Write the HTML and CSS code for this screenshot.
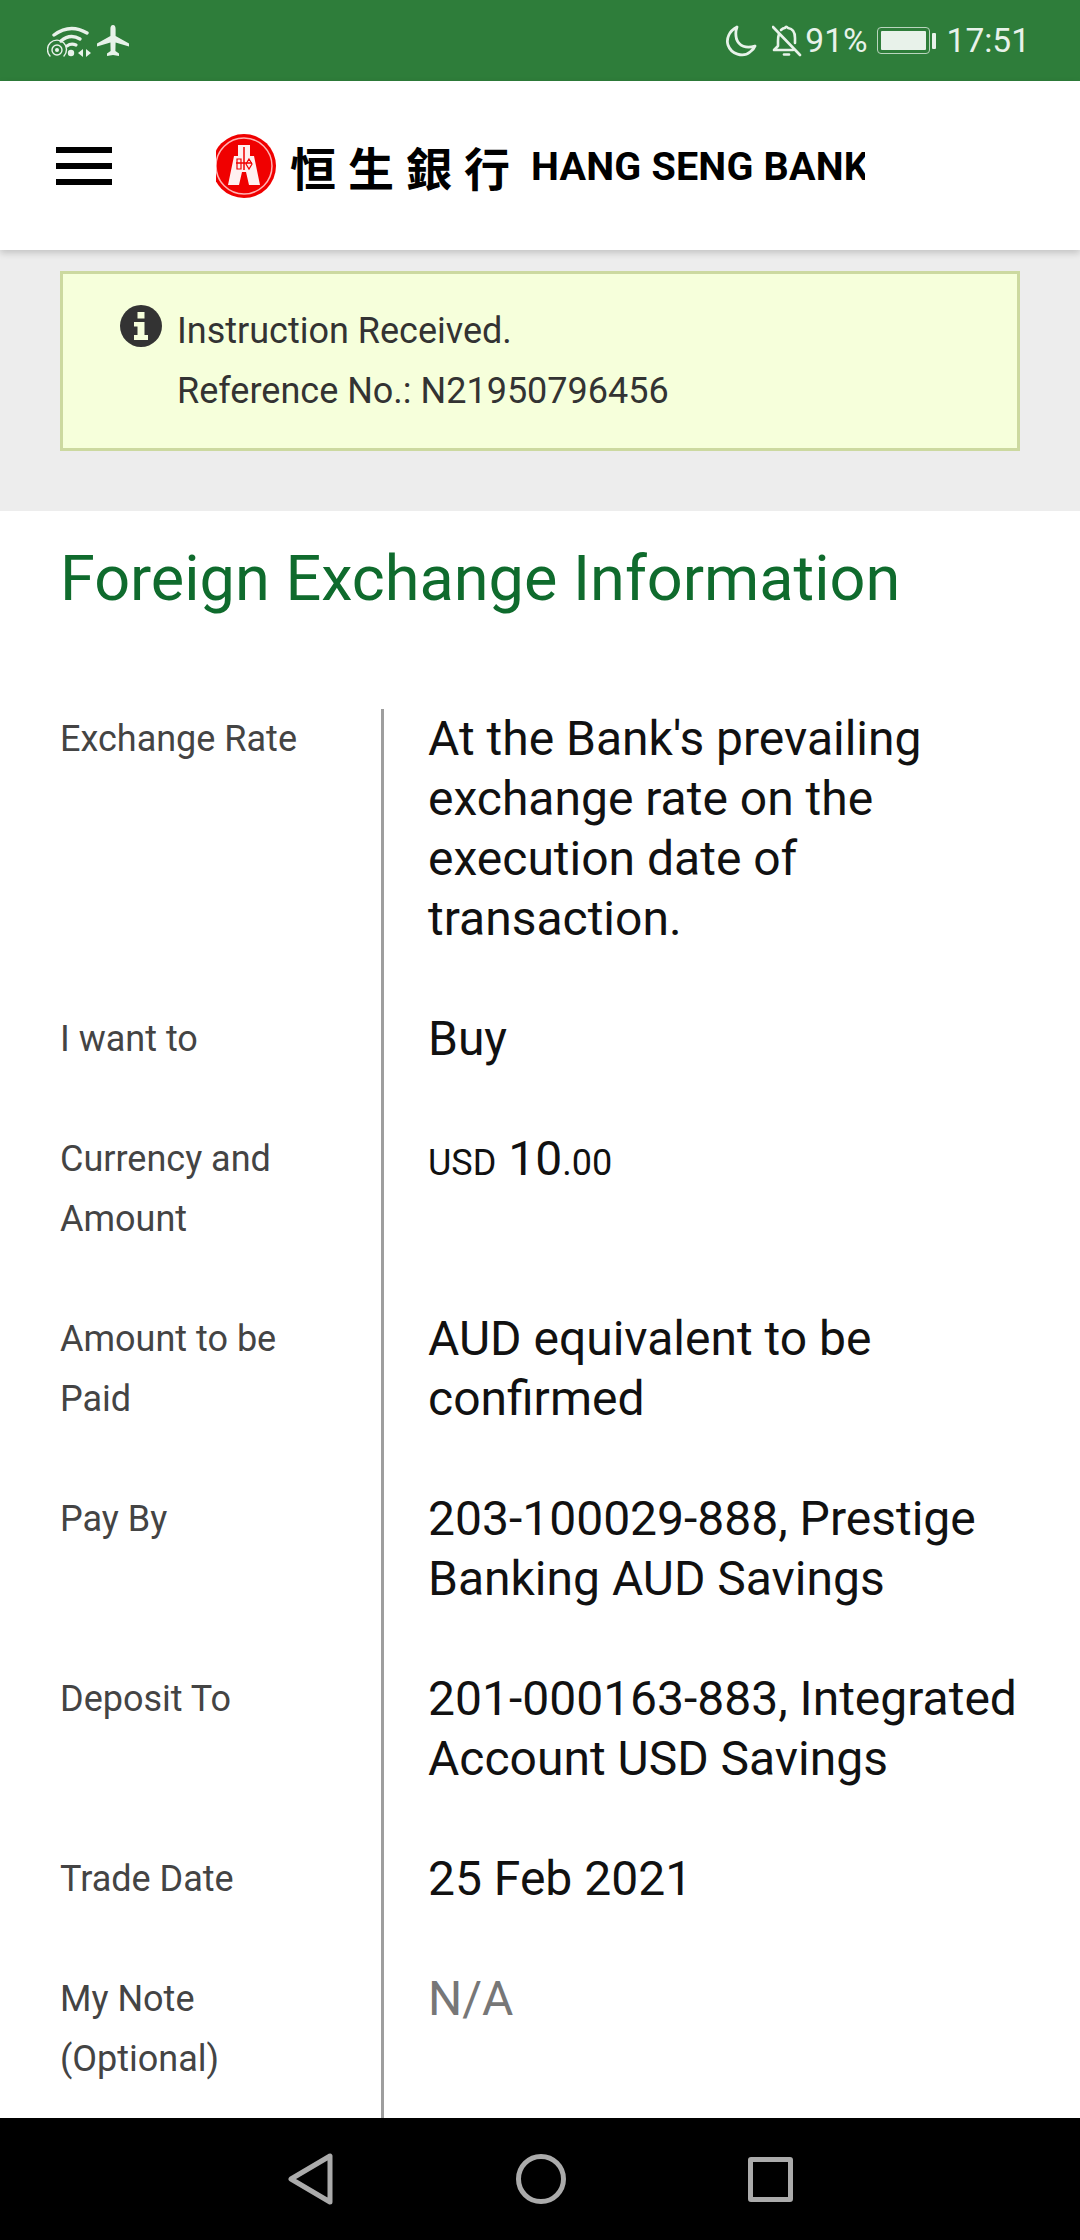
FILE: index.html
```html
<!DOCTYPE html>
<html lang="en">
<head>
    <meta charset="UTF-8">
    <meta name="viewport" content="width=device-width, initial-scale=1.0">
    <title>Hang Seng Bank - Foreign Exchange Information</title>
    <link rel="stylesheet" href="styles.css">
</head>
<body>

    <!-- Status Bar -->
    <div class="statusbar">
        <div class="status-left">
            <svg width="44" height="34" viewBox="0 0 44 34" fill="none" stroke="#e8f2ea" stroke-linecap="round">
                <path d="M7 11 Q23 -1 40 9" stroke-width="3.4"/>
                <path d="M14 17 Q23 9 33 15" stroke-width="3.4"/>
                <path d="M20 22 Q24 19 29 21" stroke-width="3.2"/>
                <circle cx="24" cy="29" r="3.2" fill="#e8f2ea" stroke="none"/>
                <circle cx="10" cy="26" r="2" fill="#e8f2ea" stroke="none"/>
                <circle cx="10" cy="26" r="5" stroke-width="1.4"/>
                <path d="M3 32 A9.5 9.5 0 1 1 17 32" stroke-width="1.4"/>
                <path d="M36 25 L31 29 L36 33 Z M39 25 L44 29 L39 33 Z" fill="#e8f2ea" stroke="none"/>
            </svg>
            <svg width="32" height="32" viewBox="0 0 32 32" fill="#e8f2ea">
                <path d="M16 0 C18 0 18.6 2 18.6 4 L18.6 11 L32 18.5 L32 21.5 L18.6 17.5 L18.4 26 L22 28.6 L22 31 L16 30 L10 31 L10 28.6 L13.6 26 L13.4 17.5 L0 21.5 L0 18.5 L13.4 11 L13.4 4 C13.4 2 14 0 16 0 Z"/>
            </svg>
        </div>
        <div class="status-right">
            <svg class="icon-moon" width="32" height="32" viewBox="0 0 32 32" fill="none" stroke="#e8f2ea" stroke-width="2.8" stroke-linejoin="round">
                <path d="M12 2 C4 6 1 14 3 20 C6 29 18 33 25 27 C27 25.5 29 24 30 21 C21 24 14 21 11.5 14 C10.5 10 10.5 6 12 2 Z"/>
            </svg>
            <svg class="icon-bell" width="30" height="32" viewBox="0 0 30 32" fill="none" stroke="#e8f2ea" stroke-width="2.6" stroke-linecap="round" stroke-linejoin="round">
                <path d="M7 9 Q6 12 6 16 L6 21 L2 25 L21 25"/>
                <path d="M9 5 Q11 3 13 3 Q14 0.5 16 3 Q23 4 23 13 L23 18"/>
                <path d="M1 2 L28 30"/>
                <path d="M12 29.5 L17 29.5"/>
            </svg>
            <span class="status-text">91%</span>
            <div class="battery">
                <div class="battery-body"><div class="battery-fill"></div></div>
                <div class="battery-nub"></div>
            </div>
            <span class="status-text">17:51</span>
        </div>
    </div>

    <!-- Header -->
    <div class="header">
        <div class="hamburger"><span></span><span></span><span></span></div>
        <div class="logo">
            <svg class="logo-seal" width="64" height="64" viewBox="0 0 64 64">
                <circle cx="32" cy="32" r="32" fill="#f00000"/>
                <circle cx="32" cy="32" r="28" fill="none" stroke="#ffb4b4" stroke-width="1.5"/>
                <path d="M26 11 L38 11 L38 22 L42 22 L48 51 L37 51 L34 38 L30 38 L27 51 L16 51 L22 22 L26 22 Z" fill="#fff0f0"/>
                <path d="M32 13 L32 36 M24 29 L40 29" stroke="#f00000" stroke-width="1.5" fill="none"/>
                <path d="M25 25 L29 25 L29 35 L25 35 Z M37 25 L40 30 L37 35 L34 30 Z" fill="none" stroke="#f00000" stroke-width="1.2"/>
            </svg>
            <span class="logo-cjk">恒生銀行</span>
            <span class="logo-en">HANG SENG BANK</span>
        </div>
    </div>

    <!-- Instruction Notice -->
    <div class="notice-wrap">
        <div class="notice">
            <svg class="notice-icon" width="42" height="42" viewBox="0 0 42 42">
                <circle cx="21" cy="21" r="21" fill="#333"/>
                <rect x="17.5" y="7" width="7" height="6.5" fill="#f6ffdb"/>
                <path d="M14 17 L24.5 17 L24.5 30 L28 30 L28 35 L14 35 L14 30 L17.5 30 L17.5 21.5 L14 21.5 Z" fill="#f6ffdb"/>
            </svg>
            <div class="notice-text">
                <div>Instruction Received.</div>
                <div>Reference No.: N21950796456</div>
            </div>
        </div>
    </div>

    <!-- Details -->
    <div class="content">
        <h1>Foreign Exchange Information</h1>
        <div class="details">
            <div class="label">Exchange Rate</div>
            <div class="value">At the Bank's prevailing exchange rate on the execution date of transaction.</div>

            <div class="label">I want to</div>
            <div class="value">Buy</div>

            <div class="label">Currency and Amount</div>
            <div class="value"><span class="small">USD</span> <span class="big">10</span><span class="small">.00</span></div>

            <div class="label">Amount to be Paid</div>
            <div class="value">AUD equivalent to be confirmed</div>

            <div class="label">Pay By</div>
            <div class="value">203-100029-888, Prestige Banking AUD Savings</div>

            <div class="label">Deposit To</div>
            <div class="value">201-000163-883, Integrated Account USD Savings</div>

            <div class="label">Trade Date</div>
            <div class="value">25 Feb 2021</div>

            <div class="label">My Note (Optional)</div>
            <div class="value muted">N/A</div>
        </div>
    </div>

    <!-- Navigation Bar -->
    <div class="navbar">
        <svg width="46" height="52" viewBox="0 0 46 52" fill="none" stroke="#ababab" stroke-width="5" stroke-linejoin="round">
            <path d="M42 3 L42 49 L3 26 Z"/>
        </svg>
        <svg width="50" height="50" viewBox="0 0 50 50" fill="none" stroke="#ababab" stroke-width="5">
            <circle cx="25" cy="25" r="22.5"/>
        </svg>
        <div class="nav-square"></div>
    </div>

</body>
</html>
```

FILE: styles.css
```css
/* Base Styling */
body {
    font-family: Roboto, "Noto Sans", sans-serif;
    color: #111;
    margin: 0;
    padding: 0;
    width: 1080px;
    height: 2240px;
    overflow: hidden;
    background-color: #fff;
    display: flex;
    flex-direction: column;
}

/* Status Bar */
.statusbar {
    height: 81px;
    flex: none;
    background-color: #2e7d3a;
    color: #e8f2ea;
    display: flex;
    justify-content: space-between;
    align-items: center;
    padding: 0 50px 0 47px;
    box-sizing: border-box;
}

.status-left,
.status-right {
    display: flex;
    align-items: center;
}

.status-left {
    gap: 6px;
}

.status-right {
    gap: 11px;
}

.status-text {
    font-size: 33.5px;
    line-height: 40px;
}

.icon-moon {
    margin-right: 4px;
}

.icon-bell {
    margin-right: -8px;
}

.battery {
    display: flex;
    align-items: center;
    gap: 2px;
    margin-left: -2px;
}

.battery-body {
    width: 53px;
    height: 27px;
    box-sizing: border-box;
    border: 1.5px solid #b9d5be;
    border-radius: 4px;
    padding: 3px;
}

.battery-fill {
    height: 100%;
    background-color: #e8f2ea;
    border-radius: 1px;
}

.battery-nub {
    width: 4px;
    height: 16px;
    background-color: #e8f2ea;
    border-radius: 1px;
}

/* Header */
.header {
    height: 169px;
    flex: none;
    background-color: #fff;
    box-shadow: 0 3px 7px rgba(0, 0, 0, 0.18);
    position: relative;
    z-index: 2;
    display: flex;
    align-items: center;
    padding-left: 56px;
    box-sizing: border-box;
}

.hamburger {
    width: 56px;
    display: flex;
    flex-direction: column;
    gap: 10px;
}

.hamburger span {
    display: block;
    height: 6px;
    background-color: #000;
}

.logo {
    width: 649px;
    margin-left: 104px;
    height: 66px;
    overflow: hidden;
    display: flex;
    align-items: center;
    white-space: nowrap;
    color: #000;
}

.logo-seal {
    flex: none;
    margin-left: -4px;
}

.logo-cjk {
    font-family: "Noto Sans CJK TC", sans-serif;
    font-size: 46px;
    font-weight: 700;
    letter-spacing: 12px;
    line-height: 50px;
    margin-left: 14px;
}

.logo-en {
    font-family: Roboto, Arial, sans-serif;
    font-size: 39.5px;
    font-weight: 700;
    letter-spacing: 0.2px;
    margin-left: 9px;
    padding-top: 2px;
}

/* Instruction Notice */
.notice-wrap {
    flex: none;
    background-color: #ededed;
    padding: 21px 60px 60px;
}

.notice {
    height: 180px;
    box-sizing: border-box;
    background-color: #f6ffdb;
    border: 3px solid #ccd9a0;
    display: flex;
    padding: 31px 0 0 57px;
    gap: 15px;
}

.notice-icon {
    flex: none;
}

.notice-text {
    font-size: 36px;
    line-height: 60px;
    color: #333;
    margin-top: -4px;
}

/* Details */
.content {
    flex: 1;
    min-height: 0;
    overflow: hidden;
    padding: 30px 24px 0 60px;
}

.content h1 {
    font-size: 63px;
    font-weight: 400;
    line-height: 75px;
    color: #0f6b2d;
    margin: 0 0 93px;
}

.details {
    display: grid;
    grid-template-columns: 321px 1fr;
    font-size: 36px;
    line-height: 60px;
}

.label {
    color: #444;
    padding: 0 60px 60px 0;
}

.value {
    font-size: 48px;
    color: #111;
    border-left: 3px solid #9e9e9e;
    padding: 0 0 60px 44px;
}

.value .small {
    font-size: 36px;
}

.value .big {
    font-size: 48px;
}

.value.muted {
    color: #777;
}

/* Navigation Bar */
.navbar {
    height: 122px;
    flex: none;
    background-color: #000;
    display: flex;
    justify-content: center;
    align-items: center;
    gap: 182px;
}

.nav-square {
    width: 45px;
    height: 45px;
    box-sizing: border-box;
    border: 5px solid #ababab;
    border-radius: 3px;
}
```
